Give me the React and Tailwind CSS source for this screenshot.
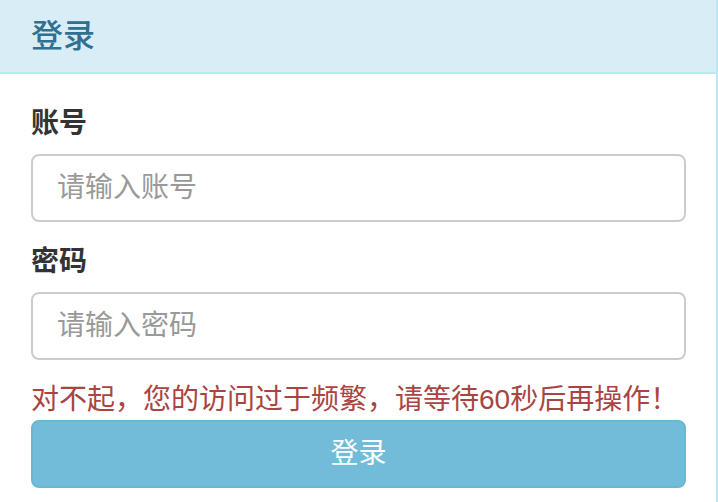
export default function App() {
  const font = { fontFamily: '"Liberation Sans", "Noto Sans CJK SC", sans-serif' };
  return (
    <div className="w-[718px] h-[502px] overflow-hidden bg-white" style={font}>
      <div className="w-[718px] border-r-2 border-[#bce8f1] min-h-[502px]">
        <div className="h-[74px] bg-[#d9edf7] border-b-2 border-[#bce8f1] flex items-center pl-[31px]">
          <h3 className="text-[32px] leading-[40px] font-medium text-[#31708f]">登录</h3>
        </div>
        <div className="pl-[31px] pr-[30px] pt-[30px]">
          <div className="mb-[20px]">
            <label className="block text-[28px] leading-[40px] font-bold text-[#333] mb-[10px]">账号</label>
            <input
              type="text"
              placeholder="请输入账号"
              className="block w-full h-[68px] border-2 border-[#ccc] rounded-[8px] px-[24px] text-[28px] text-[#555] placeholder:text-[#999] outline-none bg-white"
            />
          </div>
          <div className="mb-[20px]">
            <label className="block text-[28px] leading-[40px] font-bold text-[#333] mb-[10px]">密码</label>
            <input
              type="password"
              placeholder="请输入密码"
              className="block w-full h-[68px] border-2 border-[#ccc] rounded-[8px] px-[24px] text-[28px] text-[#555] placeholder:text-[#999] outline-none bg-white"
            />
          </div>
          <div className="text-[28px] leading-[40px] text-[#a94442] whitespace-nowrap">
            对不起，您的访问过于频繁，请等待60秒后再操作！
          </div>
          <button className="block w-full h-[68px] bg-[#72bcd9] border-2 border-[#6ab6d5] rounded-[8px] text-white text-[28px] leading-[40px]">
            登录
          </button>
        </div>
      </div>
    </div>
  );
}
